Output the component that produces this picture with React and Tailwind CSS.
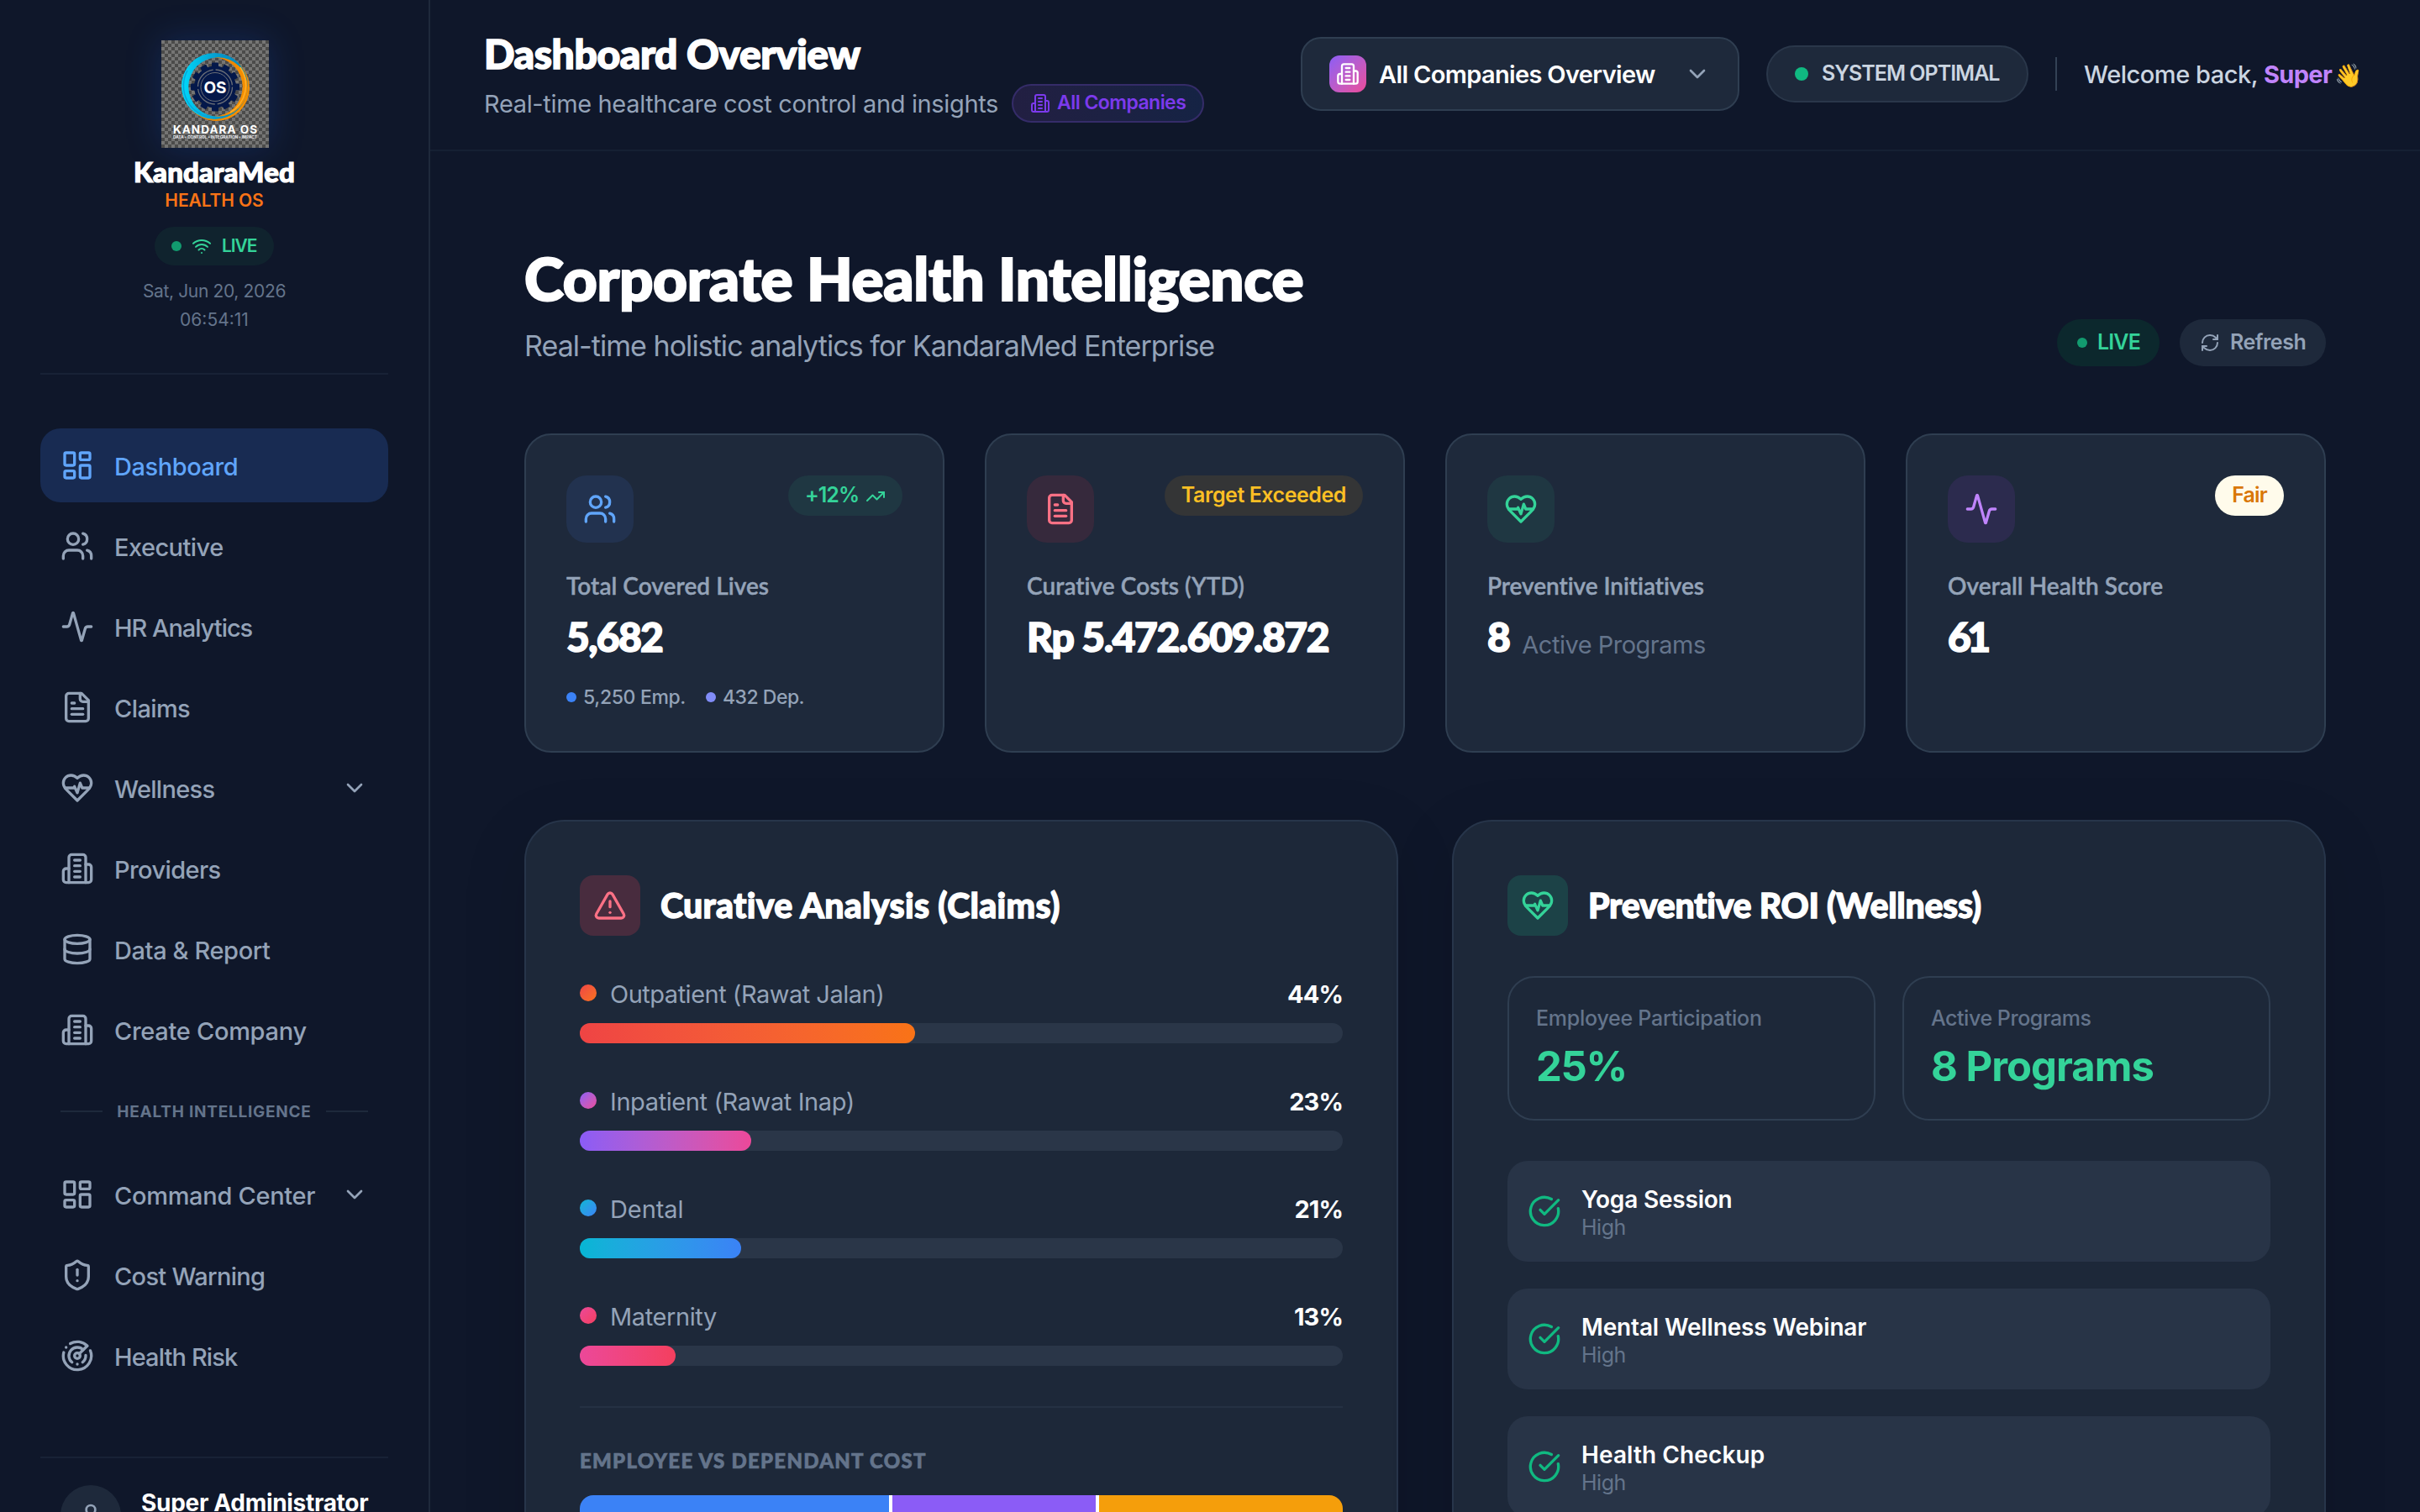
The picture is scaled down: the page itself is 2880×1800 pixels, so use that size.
import React from "react";
import {
  Activity,
  ChevronDown,
  CircleCheckBig,
  Database,
  LayoutDashboard,
  Radar,
  RefreshCw,
  ShieldAlert,
  TrendingUp,
  TriangleAlert,
  User,
  Users,
  Wifi,
} from "lucide-react";

function Icon({ className, children }) {
  return (
    <svg
      viewBox="0 0 24 24"
      fill="none"
      stroke="currentColor"
      strokeWidth="2"
      strokeLinecap="round"
      strokeLinejoin="round"
      className={className}
    >
      {children}
    </svg>
  );
}

function Building({ className }) {
  return (
    <Icon className={className}>
      <path d="M6 22V4a2 2 0 0 1 2-2h8a2 2 0 0 1 2 2v18Z" />
      <path d="M6 12H4a2 2 0 0 0-2 2v6a2 2 0 0 0 2 2h2" />
      <path d="M18 9h2a2 2 0 0 1 2 2v9a2 2 0 0 1-2 2h-2" />
      <path d="M10 6h4" />
      <path d="M10 10h4" />
      <path d="M10 14h4" />
      <path d="M10 18h4" />
    </Icon>
  );
}

function HeartPulse({ className }) {
  return (
    <Icon className={className}>
      <path d="M19 14c1.49-1.46 3-3.21 3-5.5A5.5 5.5 0 0 0 16.5 3c-1.76 0-3 .5-4.5 2-1.5-1.5-2.74-2-4.5-2A5.5 5.5 0 0 0 2 8.5c0 2.3 1.5 4.05 3 5.5l7 7Z" />
      <path d="M3.22 12H9.5l.5-1 2 4.5 2-7 1.5 3.5h5.27" />
    </Icon>
  );
}

function FileText({ className }) {
  return (
    <Icon className={className}>
      <path d="M15 2H6a2 2 0 0 0-2 2v16a2 2 0 0 0 2 2h12a2 2 0 0 0 2-2V7Z" />
      <path d="M14 2v4a2 2 0 0 0 2 2h4" />
      <path d="M10 9H8" />
      <path d="M16 13H8" />
      <path d="M16 17H8" />
    </Icon>
  );
}

const teeth = [0, 30, 60, 90, 120, 150, 180, 210, 240, 270, 300, 330];

function Logo() {
  return (
    <svg viewBox="0 0 128 128" className="ml-0.5 size-32 shadow-[0_0_40px_rgba(37,99,235,0.22)]">
      <defs>
        <pattern id="checker" width="8" height="8" patternUnits="userSpaceOnUse">
          <rect width="8" height="8" fill="#4b4b4a" />
          <rect width="4" height="4" fill="#757574" />
          <rect x="4" y="4" width="4" height="4" fill="#757574" />
        </pattern>
        <linearGradient id="cyan" x1="0" y1="0" x2="1" y2="0">
          <stop offset="0" stopColor="#00d9fb" />
          <stop offset="0.6" stopColor="#0596c9" />
          <stop offset="1" stopColor="#0284b8" />
        </linearGradient>
        <linearGradient id="orange" x1="0" y1="0" x2="1" y2="0.3">
          <stop offset="0" stopColor="#d97706" />
          <stop offset="1" stopColor="#f58f00" />
        </linearGradient>
      </defs>
      <rect width="128" height="128" fill="url(#checker)" />
      {/* two interlocking crescents */}
      <path
        fillRule="evenodd"
        fill="url(#orange)"
        d="M26 56.5a39.5 39.5 0 1 0 79 0a39.5 39.5 0 1 0 -79 0ZM26.3 55.5a35.2 35.2 0 1 1 70.4 0a35.2 35.2 0 1 1 -70.4 0Z"
      />
      <path
        fillRule="evenodd"
        fill="url(#cyan)"
        d="M24 54.5a39.5 39.5 0 1 0 79 0a39.5 39.5 0 1 0 -79 0ZM32.3 55.5a35.2 35.2 0 1 1 70.4 0a35.2 35.2 0 1 1 -70.4 0Z"
      />
      <path fill="none" stroke="#0aa5d8" strokeWidth="1.5" d="M31 36a38 38 0 0 0 30 56" />
      <path fill="none" stroke="#ffb02a" strokeWidth="1.5" d="M94 32a38 38 0 0 1-12 54" />
      <g fill="#04184a">
        <circle cx="64" cy="55.5" r="25" />
        {teeth.map((a) => (
          <rect key={a} x="60" y="26.5" width="8" height="8" rx="1" transform={`rotate(${a} 64 55.5)`} />
        ))}
      </g>
      <circle cx="64" cy="55.5" r="20.5" fill="none" stroke="#6b6f78" strokeWidth="1.3" strokeDasharray="29.2 3" />
      <circle cx="64" cy="55.5" r="17" fill="none" stroke="#6b6f78" strokeWidth="1" />
      <text x="64" y="62.5" textAnchor="middle" fill="#fff" fontSize="19" fontWeight="700" fontFamily="Inter, sans-serif" textLength="27">OS</text>
      <text x="64" y="110.6" textAnchor="middle" fill="#fff" fontSize="13.5" fontWeight="700" fontFamily="Inter, sans-serif" textLength="100">KANDARA OS</text>
      <text x="64" y="116.8" textAnchor="middle" fill="#e5e7eb" fontSize="4.8" fontWeight="700" fontFamily="Inter, sans-serif" textLength="100">DATA • CONTROL • INTEGRATION • IMPACT</text>
    </svg>
  );
}

const mainNav = [
  { label: "Dashboard", icon: LayoutDashboard, active: true, track: "tracking-[-0.45px]" },
  { label: "Executive", icon: Users, track: "tracking-[-0.55px]" },
  { label: "HR Analytics", icon: Activity, track: "tracking-[-1.05px]" },
  { label: "Claims", icon: FileText, track: "tracking-[-0.6px]" },
  { label: "Wellness", icon: HeartPulse, chevron: true, track: "tracking-[-0.7px]" },
  { label: "Providers", icon: Building, track: "tracking-[-0.6px]" },
  { label: "Data & Report", icon: Database, track: "tracking-[-0.4px]" },
  { label: "Create Company", icon: Building, track: "tracking-[-0.3px]" },
];

const healthNav = [
  { label: "Command Center", icon: LayoutDashboard, chevron: true, track: "tracking-[-0.3px]" },
  { label: "Cost Warning", icon: ShieldAlert, track: "tracking-[-0.7px]" },
  { label: "Health Risk", icon: Radar, track: "tracking-[-0.9px]" },
];

function NavItem({ item }) {
  return (
    <div
      className={`flex h-22 shrink-0 items-center rounded-3xl px-6 ${
        item.active ? "bg-[#182b52] text-[#60a5fa]" : "text-[#94a3b8]"
      }`}
    >
      <item.icon className="size-10" />
      <span className={`ml-6 whitespace-nowrap pt-[3px] text-[29px] font-medium ${item.track}`}>{item.label}</span>
      {item.chevron && <ChevronDown className="ml-auto size-8" />}
    </div>
  );
}

function Sidebar() {
  return (
    <aside className="flex h-[1800px] w-[512px] shrink-0 flex-col overflow-hidden border-r-2 border-[#1e293b] px-12 pt-12">
      <div className="flex h-[398px] shrink-0 flex-col items-center border-b-2 border-[#182236]">
        <Logo />
        <div className="mt-2 mb-px font-['Lato'] text-[33px] font-black leading-10 tracking-[0.15px] text-white [-webkit-text-stroke:1.2px]">
          KandaraMed
        </div>
        <div className="text-[21px] font-semibold leading-7 tracking-[-0.1px] text-[#f97316]">HEALTH OS</div>
        <div className="mt-[17px] flex h-[46px] w-[142px] items-center rounded-full bg-[#10232e] pl-5 text-[#34d399]">
          <span className="size-3 rounded-full bg-[#129b6f]" />
          <Wifi className="ml-3 size-6" />
          <span className="ml-3 pb-px text-[21px] font-semibold tracking-[-1.1px]">LIVE</span>
        </div>
        <div className="mt-3.5 text-[21px] leading-[34px] tracking-[-0.35px] text-[#64748b]">Sat, Jun 20, 2026</div>
        <div className="text-[21px] leading-[34px] text-[#64748b]">06:54:11</div>
      </div>

      <nav className="mt-16 flex flex-col gap-2">
        {mainNav.map((item) => (
          <NavItem key={item.label} item={item} />
        ))}
        <div className="flex h-[92px] items-center justify-between px-6 pb-[2px]">
          <span className="h-[2px] w-[50px] bg-[#1e293b]" />
          <span className="whitespace-nowrap pt-[2px] text-[19px] font-bold tracking-[0.75px] text-[#64748b]">HEALTH INTELLIGENCE</span>
          <span className="h-[2px] w-[50px] bg-[#1e293b]" />
        </div>
        {healthNav.map((item) => (
          <NavItem key={item.label} item={item} />
        ))}
      </nav>

      <div className="mt-[76px] flex items-start gap-6 border-t-2 border-[#182236] px-6 pt-8">
        <div className="flex size-18 shrink-0 items-center justify-center rounded-full bg-[#1e293b]">
          <User className="size-8 text-[#94a3b8]" />
        </div>
        <div className="pt-px whitespace-nowrap text-[28px] font-bold leading-10 tracking-[-0.3px] text-white">Super Administrator</div>
      </div>
    </aside>
  );
}

function Header() {
  return (
    <header className="flex h-[180px] shrink-0 items-start justify-between border-b-2 border-[#152033] px-16">
      <div className="pt-[34px]">
        <h1 className="font-['Lato'] text-[48px] font-black leading-[60px] tracking-[-0.4px] text-white [-webkit-text-stroke:1.6px]">
          Dashboard Overview
        </h1>
        <div className="mt-1.5 flex h-[46px] items-center gap-4">
          <p className="whitespace-nowrap pt-[2px] text-[29px] tracking-[-0.35px] text-[#94a3b8]">
            Real-time healthcare cost control and insights
          </p>
          <div className="flex h-[46px] w-[229px] items-center gap-2 rounded-full border-2 border-[#352c69] bg-linear-to-r from-[#221f42] to-[#152344] pl-5 text-[#7c3aed]">
            <Building className="size-6" />
            <span className="whitespace-nowrap pb-px text-[23px] font-semibold tracking-[-0.55px]">All Companies</span>
          </div>
        </div>
      </div>

      <div className="mt-11 flex h-22 items-center gap-8">
        <div className="flex h-22 w-[522px] items-center rounded-3xl border-2 border-[#2f3e51] bg-[#1e293b] px-8">
          <div className="flex size-11 items-center justify-center rounded-xl bg-linear-to-br from-[#8b5cf6] to-[#ec4899]">
            <Building className="size-7 text-white" />
          </div>
          <span className="ml-[15px] whitespace-nowrap pt-[2px] text-[29px] font-semibold tracking-[-0.65px] text-white">
            All Companies Overview
          </span>
          <ChevronDown className="ml-auto size-8 text-[#94a3b8]" />
        </div>
        <div className="flex h-[68px] w-[312px] items-center gap-4 rounded-full border-2 border-[#2a374a] bg-[#1e293b] pl-8">
          <span className="size-4 rounded-full bg-[#10b981]" />
          <span className="whitespace-nowrap text-[25px] font-semibold tracking-[-1px] text-[#cbd5e1]">SYSTEM OPTIMAL</span>
        </div>
        <span className="h-10 w-[2px] bg-[#334155]" />
        <div className="w-[336px] whitespace-nowrap pt-px text-[29px] font-medium tracking-[-0.47px] text-[#cbd5e1]">
          Welcome back, <span className="font-bold tracking-[-0.68px] text-[#c084fc]">Super</span>{" "}
          <span className="-ml-1 text-[27px]">👋</span>
        </div>
      </div>
    </header>
  );
}

function Badge({ className, children }) {
  return (
    <div className={`flex h-12 items-center gap-2 whitespace-nowrap rounded-full px-5 text-[25px] font-semibold ${className}`}>
      {children}
    </div>
  );
}

function StatCard({ icon: StatIcon, iconClass, badge, label, labelTrack, value, valueTrack, suffix, children }) {
  return (
    <div className="h-[380px] rounded-4xl border-2 border-[#2f3e51] bg-[#1e293b] p-12">
      <div className="flex items-start justify-between">
        <div className={`flex size-20 items-center justify-center rounded-3xl ${iconClass}`}>
          <StatIcon className="size-10" />
        </div>
        {badge}
      </div>
      <div
        className={`mt-[33px] whitespace-nowrap font-['Lato'] text-[28px] font-semibold leading-9 text-[#94a3b8] [-webkit-text-stroke:0.4px] ${labelTrack}`}
      >
        {label}
      </div>
      <div className="mt-[13px] flex items-baseline gap-[15px] whitespace-nowrap leading-[60px]">
        <span className={`font-['Lato'] text-[48px] font-black text-white [-webkit-text-stroke:1.6px] ${valueTrack}`}>{value}</span>
        {suffix && <span className="relative top-[2px] text-[29px] tracking-[-0.5px] text-[#64748b]">{suffix}</span>}
      </div>
      {children}
    </div>
  );
}

const claims = [
  { name: "Outpatient (Rawat Jalan)", pct: "44%", width: 43.9, fill: "from-[#ef4444] to-[#f97316]", track: "tracking-[-0.5px]" },
  { name: "Inpatient (Rawat Inap)", pct: "23%", width: 22.5, fill: "from-[#8b5cf6] to-[#ec4899]", track: "tracking-[-0.4px]" },
  { name: "Dental", pct: "21%", width: 21.1, fill: "from-[#06b6d4] to-[#3b82f6]", track: "tracking-[-0.1px]" },
  { name: "Maternity", pct: "13%", width: 12.6, fill: "from-[#ec4899] to-[#f43f5e]", track: "tracking-[-0.4px]" },
];

const programs = [
  { name: "Yoga Session", track: "tracking-[-0.2px]" },
  { name: "Mental Wellness Webinar", track: "tracking-[-0.15px]" },
  { name: "Health Checkup", track: "tracking-[0.1px]" },
];

function Panel({ icon: PanelIcon, iconClass, title, titleTrack, children }) {
  return (
    <section className="h-[1200px] rounded-[48px] border-2 border-[#27354a] bg-[#1d2839] p-16 shadow-[0_20px_80px_rgba(0,0,0,0.12)]">
      <div className="flex items-center gap-6">
        <div className={`flex size-18 items-center justify-center rounded-2xl ${iconClass}`}>
          <PanelIcon className="size-10" />
        </div>
        <h3 className={`whitespace-nowrap font-['Lato'] text-[41px] font-black leading-[60px] text-white [-webkit-text-stroke:1.3px] ${titleTrack}`}>
          {title}
        </h3>
      </div>
      {children}
    </section>
  );
}

function CurativePanel() {
  return (
    <Panel icon={TriangleAlert} iconClass="bg-[#482c3e] text-[#fb7185]" title="Curative Analysis (Claims)" titleTrack="tracking-[0.3px]">
      <div className="mt-12 flex flex-col gap-12">
        {claims.map((c) => (
          <div key={c.name}>
            <div className="flex h-11 items-center">
              <span className={`-mt-1 size-5 rounded-full bg-linear-135 ${c.fill}`} />
              <span className={`ml-4 text-[29px] text-[#94a3b8] ${c.track}`}>{c.name}</span>
              <span className="ml-auto text-[29px] font-bold tracking-[-0.9px] text-white">{c.pct}</span>
            </div>
            <div className="mt-3 h-6 rounded-full bg-[#2a3648]">
              <div className={`h-6 rounded-full bg-linear-to-r ${c.fill}`} style={{ width: `${c.width}%` }} />
            </div>
          </div>
        ))}
      </div>
      <div className="mt-12 border-t-2 border-[#253143] pt-[43px]">
        <div className="font-['Lato'] text-[24px] font-black leading-10 tracking-[1.25px] text-[#64748b] [-webkit-text-stroke:0.7px]">
          EMPLOYEE VS DEPENDANT COST
        </div>
        <div className="mt-[21px] flex h-12 overflow-hidden rounded-2xl">
          <div className="w-[368px] bg-[#3b82f6]" />
          <div className="w-[246px] border-l-4 border-white bg-[#8b5cf6]" />
          <div className="flex-1 border-l-4 border-white bg-[#f59e0b]" />
        </div>
      </div>
    </Panel>
  );
}

function PreventivePanel() {
  return (
    <Panel icon={HeartPulse} iconClass="bg-[#1c4247] text-[#34d399]" title="Preventive ROI (Wellness)" titleTrack="tracking-[-0.3px]">
      <div className="mt-12 grid grid-cols-2 gap-8 whitespace-nowrap">
        <div className="h-[172px] rounded-4xl border-2 border-[#2f3e51] p-8">
          <div className="text-[25px] font-medium leading-8 tracking-[-0.25px] text-[#64748b]">Employee Participation</div>
          <div className="mt-3 text-[49px] font-bold leading-[60px] tracking-[-1.4px] text-[#34d399]">25%</div>
        </div>
        <div className="h-[172px] rounded-4xl border-2 border-[#2f3e51] p-8">
          <div className="text-[25px] font-medium leading-8 tracking-[-0.45px] text-[#64748b]">Active Programs</div>
          <div className="mt-3 text-[49px] font-bold leading-[60px] tracking-[-1px] text-[#34d399]">8 Programs</div>
        </div>
      </div>
      <div className="mt-12 flex flex-col gap-8">
        {programs.map((p) => (
          <div key={p.name} className="flex h-30 items-center gap-6 rounded-3xl bg-[#283447] px-6">
            <CircleCheckBig className="size-10 text-[#10b981]" />
            <div className="pt-1.5">
              <div className={`text-[28px] font-semibold leading-[33px] text-white ${p.track}`}>{p.name}</div>
              <div className="text-[25px] leading-[33px] tracking-[-0.5px] text-[#64748b]">High</div>
            </div>
          </div>
        ))}
      </div>
    </Panel>
  );
}

function Dashboard() {
  return (
    <div className="px-28 pt-28">
      <div className="flex items-end justify-between">
        <div>
          <h2 className="-mt-px font-['Lato'] text-[71px] font-black leading-20 tracking-[-0.3px] text-white [-webkit-text-stroke:2.2px]">
            Corporate Health Intelligence
          </h2>
          <p className="mt-4 text-[34px] leading-[49px] tracking-[-0.95px] text-[#94a3b8]">
            Real-time holistic analytics for KandaraMed Enterprise
          </p>
        </div>
        <div className="flex gap-6">
          <div className="flex h-14 w-[122px] items-center gap-3 rounded-full bg-[#0c282d] pl-6 text-[#34d399]">
            <span className="size-3 rounded-full bg-[#129b6f]" />
            <span className="text-[25px] font-semibold tracking-[-0.85px]">LIVE</span>
          </div>
          <div className="flex h-14 w-[174px] items-center gap-3 rounded-full bg-[#1e293b] pl-6 text-[#94a3b8]">
            <RefreshCw className="size-6" />
            <span className="text-[25px] font-semibold tracking-[-0.5px]">Refresh</span>
          </div>
        </div>
      </div>

      <div className="mt-20 grid grid-cols-4 gap-12">
        <StatCard
          icon={Users}
          iconClass="bg-[#22324f] text-[#60a5fa]"
          label="Total Covered Lives"
          labelTrack="tracking-[0.05px]"
          value="5,682"
          valueTrack="tracking-[-1.7px]"
          badge={
            <Badge className="bg-[#1f3742] tracking-[-1px] text-[#34d399]">
              +12% <TrendingUp className="mt-px size-6" />
            </Badge>
          }
        >
          <div className="mt-[26px] flex h-8 items-center text-[23px] font-medium text-[#94a3b8]">
            <span className="size-3 rounded-full bg-[#3b82f6]" />
            <span className="ml-2 tracking-[-0.35px]">5,250 Emp.</span>
            <span className="ml-6 size-3 rounded-full bg-[#818cf8]" />
            <span className="ml-2 tracking-[-0.5px]">432 Dep.</span>
          </div>
        </StatCard>
        <StatCard
          icon={FileText}
          iconClass="bg-[#36293c] text-[#fb7185]"
          label="Curative Costs (YTD)"
          labelTrack="tracking-[0.05px]"
          value="Rp 5.472.609.872"
          valueTrack="tracking-[-1.45px]"
          badge={<Badge className="bg-[#343536] tracking-[-0.45px] text-[#fbbf24]">Target Exceeded</Badge>}
        />
        <StatCard
          icon={HeartPulse}
          iconClass="bg-[#1f3742] text-[#34d399]"
          label="Preventive Initiatives"
          labelTrack="tracking-[-0.05px]"
          value="8"
          valueTrack="tracking-[-1.5px]"
          suffix="Active Programs"
        />
        <StatCard
          icon={Activity}
          iconClass="bg-[#2c2b4e] text-[#c084fc]"
          label="Overall Health Score"
          labelTrack="tracking-[0.05px]"
          value="61"
          valueTrack="tracking-[-4.5px]"
          badge={<Badge className="bg-[#fffbeb] tracking-[-0.8px] text-[#d97706]">Fair</Badge>}
        />
      </div>

      <div className="mt-20 grid grid-cols-2 gap-16">
        <CurativePanel />
        <PreventivePanel />
      </div>
    </div>
  );
}

function App() {
  return (
    <div className="flex h-[1800px] w-[2880px] overflow-hidden bg-[#0f172a] font-['Inter',sans-serif]">
      <Sidebar />
      <main className="flex h-[1800px] flex-1 flex-col overflow-hidden">
        <Header />
        <Dashboard />
      </main>
    </div>
  );
}

export default App;
